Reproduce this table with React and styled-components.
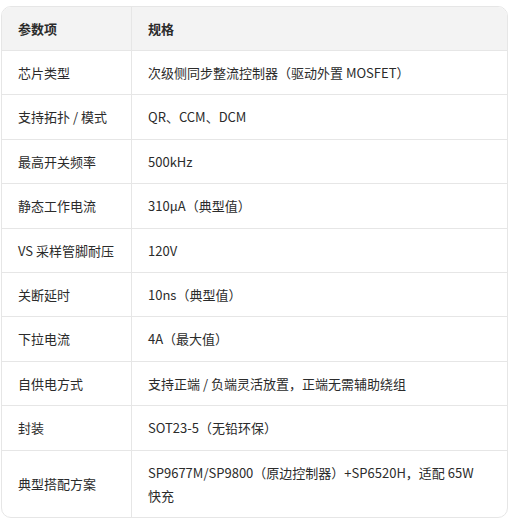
import React from "react";
import styled, { createGlobalStyle } from "styled-components";

const GlobalStyle = createGlobalStyle`
  body {
    margin: 0;
    background: #ffffff;
    font-family: "Noto Sans CJK SC", "Noto Sans", sans-serif;
  }
`;

const Wrapper = styled.div`
  margin: 6px 2px 0 1px;
  border: 1px solid #e6e6e6;
  border-radius: 10px;
  overflow: hidden;
`;

const Table = styled.table`
  width: 100%;
  border-collapse: collapse;
  font-size: 13px;
  color: #2b2b2b;
`;

const HeadCell = styled.th`
  background: #f3f3f3;
  text-align: left;
  font-weight: 700;
  line-height: 23px;
  padding: 10px 16px;
  border-bottom: 1px solid #e6e6e6;
  width: ${(p) => p.$width || "auto"};
  & + & {
    border-left: 1px solid #e6e6e6;
  }
`;

const Cell = styled.td`
  line-height: 23.4px;
  padding: 10px 16px;
  vertical-align: middle;
  & + & {
    border-left: 1px solid #e6e6e6;
    padding-right: 24px;
  }
`;

const Row = styled.tr`
  & + & td {
    border-top: 1px solid #e6e6e6;
  }
`;

const specs = [
  ["芯片类型", "次级侧同步整流控制器（驱动外置 MOSFET）"],
  ["支持拓扑 / 模式", "QR、CCM、DCM"],
  ["最高开关频率", "500kHz"],
  ["静态工作电流", "310μA（典型值）"],
  ["VS 采样管脚耐压", "120V"],
  ["关断延时", "10ns（典型值）"],
  ["下拉电流", "4A（最大值）"],
  ["自供电方式", "支持正端 / 负端灵活放置，正端无需辅助绕组"],
  ["封装", "SOT23-5（无铅环保）"],
  ["典型搭配方案", "SP9677M/SP9800（原边控制器）+SP6520H，适配 65W 快充"],
];

export default function App() {
  return (
    <>
      <GlobalStyle />
      <Wrapper>
        <Table>
          <thead>
            <tr>
              <HeadCell $width="97px">参数项</HeadCell>
              <HeadCell>规格</HeadCell>
            </tr>
          </thead>
          <tbody>
            {specs.map(([name, value]) => (
              <Row key={name}>
                <Cell>{name}</Cell>
                <Cell>{value}</Cell>
              </Row>
            ))}
          </tbody>
        </Table>
      </Wrapper>
    </>
  );
}
